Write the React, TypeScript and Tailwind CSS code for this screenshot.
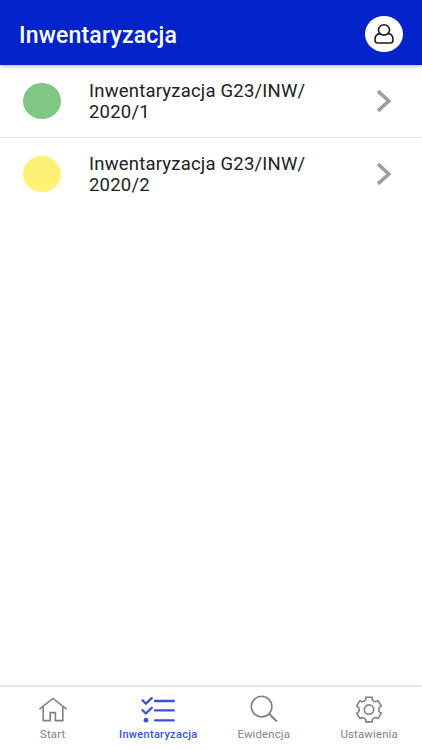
import { ReactNode } from "react";

type Inventory = {
    id: number;
    prefix: string;
    number: string;
    dot: string;
};

const inventories: Inventory[] = [
    { id: 1, prefix: "Inwentaryzacja G23/INW/", number: "2020/1", dot: "bg-[#81c784]" },
    { id: 2, prefix: "Inwentaryzacja G23/INW/", number: "2020/2", dot: "bg-[#fff176]" },
];

function UserIcon() {
    return (
        <svg width="20" height="22" viewBox="0 0 20 22" fill="none" stroke="#1c1c1c" strokeWidth="1.6" strokeLinejoin="round">
            <ellipse cx="10" cy="6.9" rx="5.5" ry="5.2" />
            <path d="M6.2 10.6C2.4 10.6 1 13.8 1 16.4v.9c0 1.8 1 2.7 2.7 2.7h12.6c1.7 0 2.7-.9 2.7-2.7v-.9c0-2.6-1.4-5.8-5.2-5.8" />
        </svg>
    );
}

function ChevronIcon() {
    return (
        <svg width="16" height="24" viewBox="0 0 16 24" fill="none" stroke="#9e9e9e" strokeWidth="3.6">
            <path d="M2 2.2l10.8 9.8L2 21.8" />
        </svg>
    );
}

function HomeIcon() {
    return (
        <svg width="30" height="28" viewBox="0 0 30 28" fill="none" stroke="currentColor" strokeWidth="1.6">
            <path d="M1.4 14.2L15 3.4l13.6 10.8" />
            <path d="M5.2 11.4v14.2h7v-8h5.2v8h7.4V11.4" />
        </svg>
    );
}

function ChecklistIcon() {
    return (
        <svg width="34" height="28" viewBox="0 0 34 28" fill="none" stroke="currentColor" strokeWidth="2.3" strokeLinecap="round">
            <path d="M1.6 5.4l3.3 3.3 5.8-5.6" />
            <path d="M1.6 15.2l3.3 3.3 5.8-5.6" />
            <circle cx="5" cy="25.2" r="2.4" fill="currentColor" stroke="none" />
            <path d="M14 6h18.8M14 15.4h18.8M14 25.3h18.8" />
        </svg>
    );
}

function SearchIcon() {
    return (
        <svg width="30" height="28" viewBox="0 0 30 28" fill="none" stroke="currentColor" strokeWidth="1.6">
            <circle cx="12.6" cy="11.6" r="10.3" />
            <path d="M20 18.8l8 7.8" strokeWidth="2" />
        </svg>
    );
}

function GearIcon() {
    return (
        <svg width="30" height="28" viewBox="-15 -14.6 30 28" fill="none" stroke="currentColor" strokeWidth="1.6" strokeLinejoin="round">
            <path d="M-3.2-10L-3.2-12.3H3.2V-10Q4.4-8.2 6.8-7.9L9-9L12.3-3.6L10.3-2.3Q9.2 0 10.3 2.3L12.3 3.6L9 9L6.8 7.9Q4.4 8.2 3.2 10V12.3H-3.2V10Q-4.4 8.2-6.8 7.9L-9 9L-12.3 3.6L-10.3 2.3Q-9.2 0-10.3-2.3L-12.3-3.6L-9-9L-6.8-7.9Q-4.4-8.2-3.2-10Z" />
            <circle r="4.7" />
        </svg>
    );
}

function Tab({ label, icon, active }: { label: string; icon: ReactNode; active?: boolean }) {
    return (
        <button className={`flex flex-1 flex-col items-center pt-2 ${active ? "font-medium text-[#3a52d6]" : "text-[#808088]"}`}>
            {icon}
            <span className={`mt-1 leading-4 ${active ? "text-[11px] tracking-[0.3px]" : "text-[11.3px] tracking-[0.2px]"}`}>{label}</span>
        </button>
    );
}

export default function App() {
    return (
        <div className="flex h-screen flex-col bg-white font-['Roboto',sans-serif]">
            <header className="z-10 flex h-[65px] shrink-0 items-center justify-between bg-[#0223c9] px-[19px] pt-[3px] shadow-[0_1px_4px_rgba(0,20,160,0.35)]">
                <h1 className="pt-[3px] text-[23px] leading-7 font-medium tracking-[0.2px] text-white">Inwentaryzacja</h1>
                <button className="flex h-9 w-[38px] items-center justify-center rounded-[50%] bg-white">
                    <UserIcon />
                </button>
            </header>

            <main className="flex-1">
                {inventories.map(item => (
                    <div key={item.id} className="flex h-[73px] items-center border-b border-[#e8e8e8] pr-[30px] pl-[23px] last:border-transparent">
                        <span className={`h-9 w-[38px] shrink-0 rounded-[50%] ${item.dot}`}></span>
                        <p className="ml-7 w-[230px] pt-[1px] text-[18.5px] leading-[21px] tracking-[0.2px] text-[#212121]">
                            {item.prefix}<wbr />{item.number}
                        </p>
                        <span className="ml-auto">
                            <ChevronIcon />
                        </span>
                    </div>
                ))}
            </main>

            <nav className="flex h-[63px] shrink-0 bg-white shadow-[0_-1px_3px_rgba(0,0,0,0.2)]">
                <Tab label="Start" icon={<HomeIcon />} />
                <Tab label="Inwentaryzacja" icon={<ChecklistIcon />} active />
                <Tab label="Ewidencja" icon={<SearchIcon />} />
                <Tab label="Ustawienia" icon={<GearIcon />} />
            </nav>
        </div>
    );
}
